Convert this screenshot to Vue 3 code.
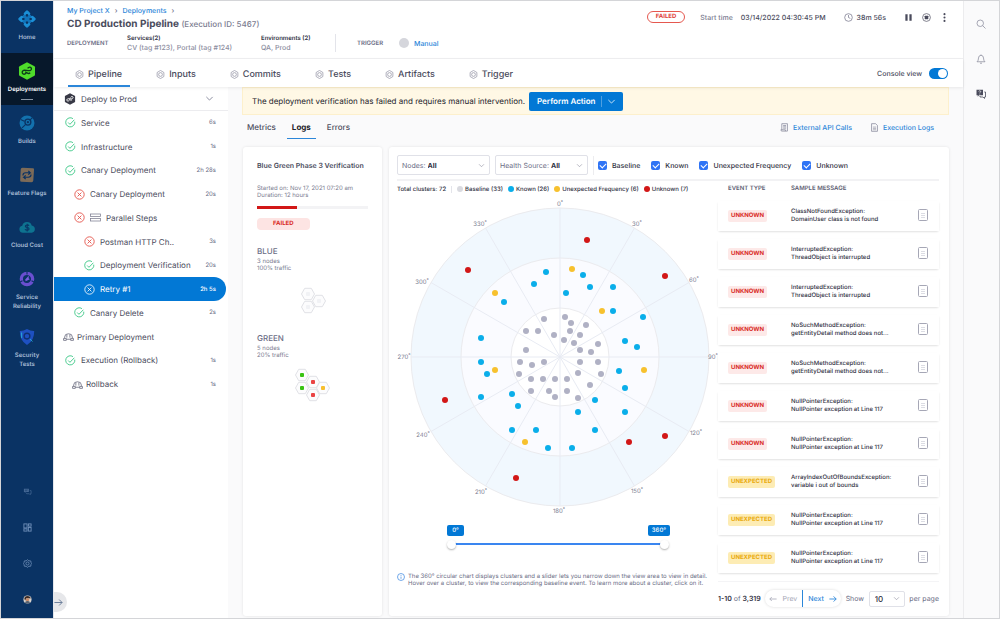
<script setup>
import { ref } from 'vue'

const icons = {
  home: '<g fill="#1b8fd6"><rect x="4" y="4" width="12" height="12" rx="2" transform="rotate(45 10 10)" fill="#1173bb"/><rect x="7" y="1" width="6" height="6" rx="1.5" transform="rotate(45 10 4)"/><rect x="7" y="13" width="6" height="6" rx="1.5" transform="rotate(45 10 16)"/><rect x="1" y="7" width="6" height="6" rx="1.5" transform="rotate(45 4 10)"/><rect x="13" y="7" width="6" height="6" rx="1.5" transform="rotate(45 16 10)"/></g><g fill="#0a3364"><circle cx="10" cy="6" r="1.5"/><circle cx="10" cy="14" r="1.5"/><circle cx="6" cy="10" r="1.5"/><circle cx="14" cy="10" r="1.5"/></g>',
  deployments: '<path d="M10 .3l8.300 4.500q.6.4.6 1v8.400q0 .6-.6 1L10 19.700l-8.300-4.500q-.6-.4-.6-1V5.800q0-.6.6-1z" fill="#4fdc2b"/><path d="M9.300 11.900c-1.200 1.500-2.600 2-3.700 1.300-1.500-1-1.200-3.500.8-4 1.400-.300 5.500.800 7 .300 1.900-.600 2-2.900.6-3.600-1.300-.6-2.500 0-3.300 1.200M8 10.800l2 1.100c1.200 1 2.600 1 3.500 0" fill="none" stroke="#0c3a1a" stroke-width="1.500"/>',
  builds: '<circle cx="10" cy="10" r="8.300" fill="#1371ad"/><circle cx="11" cy="9" r="3.300" fill="none" stroke="#0a3364" stroke-width="1.500"/><path d="M8.500 11.500l-4 4M3 6l4 2M16 4l-3 3" stroke="#0a3364" stroke-width="1.200"/><circle cx="11" cy="9" r="1.300" fill="#0a3364"/>',
  flags: '<path d="M3 4q0-2 2-2l11.500.6q1.500 0 1.300 1.600L17 16q-.2 2-2 2L4 17.500q-1.700-.1-1.600-1.800z" fill="#7d6b58"/><path d="M5.500 10.500q0-3 3-3h5l-2-2M13.500 7.500l-2 2M14.500 9.500q0 3-3 3h-5l2-2M6.500 12.500l2 2" fill="none" stroke="#0a3364" stroke-width="1.300"/>',
  cloud: '<path d="M5.500 16.500a4 4 0 0 1-.8-7.900 5.500 5.500 0 0 1 10.500-.4 4.200 4.200 0 0 1 0 8.300z" fill="#0e7390"/><path d="M12.300 8.500q-1-1-2.500-.8-1.800.3-1.700 1.500.2 1.200 2 1.300 2.200.2 2.200 1.600 0 1.300-2.100 1.400-1.500 0-2.500-.9M10.200 6.300v8.800" fill="none" stroke="#0a3364" stroke-width="1.200"/>',
  reliability: '<circle cx="10" cy="10" r="6.300" fill="none" stroke="#6a4fd0" stroke-width="3.600"/><path d="M10 0v5M1 14l4-2M19 14l-4-2" stroke="#0a3364" stroke-width="1.200"/><path d="M8.500 12.500l-.5-2L12 6.500l-.2 2.800 1.400 1z" fill="#7b5fe0"/>',
  security: '<path d="M10 1q4 2.500 8 2.300.3 10.500-8 15.700Q1.700 13.800 2 3.300 6 3.500 10 1z" fill="#1e50c0"/><circle cx="10" cy="9" r="3.200" fill="none" stroke="#0f2f6d" stroke-width="1.500"/><path d="M13 12l3 3M4 5v6" stroke="#27b0d8" stroke-width="1"/>',
  chat: '<path d="M2 4h11v7H7l-3 2v-2H2z" fill="currentColor"/><path d="M15 8h3v7h-2v2l-2-2H8v-2" fill="none" stroke="currentColor" stroke-width="1.500"/><path d="M4 6.500h7M4 8.500h5" stroke="#0a3364"/>',
  grid: '<g fill="none" stroke="currentColor" stroke-width="2"><rect x="2" y="2" width="7" height="9"/><rect x="2" y="13" width="7" height="5"/><rect x="12" y="2" width="6" height="5"/><rect x="12" y="10" width="6" height="8"/></g>',
  gear: '<g fill="none" stroke="currentColor" stroke-width="1.800"><path d="M10 1.500l3 2.500 4.200.3.800 4L19 10l-1.200 2-.6 4-4.200.3-3 2.200-3-2.200-4-.3-.8-4L1 10l1.200-2 .8-3.700L7 4z"/><circle cx="10" cy="10" r="3.500"/></g>',
  avatar: '<circle cx="10" cy="10" r="9" fill="#d9d3cd"/><path d="M3 9q0-7 7-7t7 6l-4-1-6 1-2 4z" fill="#3b2c28"/><circle cx="10" cy="10.500" r="4" fill="#c98e6c"/><path d="M4 16q6-5 12 0-6 6-12 0z" fill="#56606e"/>',
  target: '<g fill="none" stroke="currentColor" stroke-width="1.500"><path d="M10 1l7.500 4.500v9L10 19l-7.500-4.500v-9z"/><circle cx="10" cy="10" r="4.200"/></g>',
  stage: '<path d="M10 .5l8.500 4.700v9.600L10 19.500l-8.500-4.700V5.200z" fill="#383946"/><path d="M9 12c-1.500 2-4 1.800-4.300 0-.2-1.800 1.500-2.600 3-2.500l4.600.2c2 0 3.300-1.500 2.700-3-.8-1.500-3-1.200-4 .8M8.500 11l3 .8 2-.3" fill="none" stroke="#fff" stroke-width="1.500"/>',
  ok: '<g fill="none" stroke="#42c98a" stroke-width="1.700"><path d="M17.800 8.500A8.300 8.300 0 1 1 14.500 3"/><path d="M5.800 10l3.200 3.300L17 5"/></g>',
  fail: '<g fill="none" stroke="#e5584f" stroke-width="1.700"><circle cx="10" cy="10" r="8.500"/><path d="M6.500 6.500l7 7m0-7l-7 7"/></g>',
  failWhite: '<g fill="none" stroke="#fff" stroke-width="1.500"><circle cx="10" cy="10" r="8.500"/><path d="M6.500 6.500l7 7m0-7l-7 7"/></g>',
  group: '<g fill="none" stroke="#6f7083" stroke-width="1.500"><path d="M3 13V11q0-6 7-6t7 6v2M1 17h5v-3.500H1zM14 17h5v-3.500h-5zM6 15h8M7 6.500V12M12.500 6.500V12"/></g>',
  chevron: '<path d="M3 6.500l7 7 7-7" fill="none" stroke="currentColor" stroke-width="1.700"/>',
  doc: '<g fill="none" stroke="currentColor" stroke-width="1.500"><path d="M3.500 1.500h9l4 4v13h-13z"/><path d="M6.500 9h7M6.500 12h7M6.500 15h7" stroke-width="1.200"/></g>',
  list: '<g fill="none" stroke="currentColor" stroke-width="1.500"><path d="M4 15V1.500h12.500V18H4q-2 0-2-3h10v3M7 5.500h6.500M7 8.500h6.500M7 11.500h6.500"/></g>',
  clock: '<g fill="none" stroke="currentColor" stroke-width="1.700"><circle cx="10" cy="10" r="8.500"/><path d="M10 4.500V10l4 2"/></g>',
  pause: '<path d="M3 3h5v14H3zM12 3h5v14h-5z" fill="currentColor"/>',
  stop: '<circle cx="10" cy="10" r="8.700" fill="none" stroke="currentColor" stroke-width="1.500"/><rect x="6" y="6" width="8" height="8" rx="1" fill="currentColor"/>',
  more: '<g fill="currentColor"><circle cx="10" cy="2.500" r="2.300"/><circle cx="10" cy="10" r="2.300"/><circle cx="10" cy="17.500" r="2.300"/></g>',
  search: '<g fill="none" stroke="currentColor" stroke-width="1.500"><circle cx="8.500" cy="8.500" r="6.500"/><path d="M13.300 13.300L19 19"/></g>',
  bell: '<path d="M2 15.500q3-2 3-7.500 0-5 5-5.500 5 .5 5 5.500 0 5.500 3 7.500zM8 18q2 1.500 4 0M10 1v1.500" fill="none" stroke="currentColor" stroke-width="1.500"/>',
  help: '<path d="M1 1.500h13v11H6l-2.500 3v-3H1z" fill="currentColor"/><path d="M16.500 6H19v10h-2v3l-3-3H8v-2" fill="none" stroke="currentColor" stroke-width="1.600"/><path d="M5.500 5q.2-1.500 2-1.500t2 1.500q0 1-1 1.500-1 .4-1 1.800M7.500 9.500v1.500" fill="none" stroke="#fff" stroke-width="1.300"/>',
  info: '<g fill="none" stroke="#3a86e0" stroke-width="1.800"><circle cx="10" cy="10" r="8.700"/><path d="M10 9v5.500M10 5.300v2"/></g>',
  arrow: '<path d="M1 10h17M11.500 3.500L18 10l-6.500 6.500" fill="none" stroke="currentColor" stroke-width="2.200"/>',
  arrowLeft: '<path d="M19 10H2M7 5l-5 5 5 5" fill="none" stroke="currentColor" stroke-width="2"/>',
  bars: '<g fill="#fff" stroke="#7c7d90" stroke-width="1.500"><rect x="1" y="3" width="20" height="5"/><rect x="1" y="12" width="20" height="5"/></g>'
}

const modules = [
  { icon: 'home', label: 'Home' },
  { icon: 'deployments', label: 'Deployments', active: true },
  { icon: 'builds', label: 'Builds' },
  { icon: 'flags', label: 'Feature Flags' },
  { icon: 'cloud', label: 'Cloud Cost' },
  { icon: 'reliability', label: 'Service\nReliability' },
  { icon: 'security', label: 'Security\nTests' }
]
const utilities = [
  { icon: 'chat', label: 'Messages', dim: true },
  { icon: 'grid', label: 'Dashboards' },
  { icon: 'gear', label: 'Settings' },
  { icon: 'avatar', label: 'Profile' }
]
const tabs = ['Pipeline', 'Inputs', 'Commits', 'Tests', 'Artifacts', 'Trigger']

const steps = [
  { name: 'Service', time: '6s', icon: 'ok', level: 0 },
  { name: 'Infrastructure', time: '1s', icon: 'ok', level: 0 },
  { name: 'Canary Deployment', time: '2h 28s', icon: 'ok', level: 0 },
  { name: 'Canary Deployment', time: '20s', icon: 'fail', level: 1 },
  { name: 'Parallel Steps', icon: 'fail', level: 1, parallel: true },
  { name: 'Postman HTTP Ch..', time: '3s', icon: 'fail', level: 2 },
  { name: 'Deployment Verification', time: '20s', icon: 'ok', level: 2 },
  { name: 'Retry #1', time: '2h 5s', icon: 'failWhite', level: 2, selected: true },
  { name: 'Canary Delete', time: '2s', icon: 'ok', level: 1 },
  { name: 'Primary Deployment', icon: 'group', level: 0, group: true },
  { name: 'Execution (Rollback)', time: '1s', icon: 'ok', level: 0 },
  { name: 'Rollback', time: '1s', icon: 'group', level: 1, group: true }
]

const filters = ref([
  { name: 'Baseline', on: true },
  { name: 'Known', on: true },
  { name: 'Unexpected Frequency', on: true },
  { name: 'Unknown', on: true }
])
const legend = [
  { text: 'Baseline (33)', kind: 'base' },
  { text: 'Known (26)', kind: 'known' },
  { text: 'Unexpected Frequency (6)', kind: 'unexpected' },
  { text: 'Unknown (7)', kind: 'unknown' }
]

const clusters = [
  { color: '#b0b1c4', points: [[-16, -38], [-34, -26], [-22, -26], [-6, -22], [5, -40], [11, -34], [26, -32], [10, -26], [20, -22], [4, -17], [14, -14], [38, -13], [20, -7], [31, -5], [-34, -7], [-40, 5], [-28, 8], [-16, 5], [-41, 17], [-29, 22], [-17, 22], [-5, 22], [7, 22], [-29, 34], [-11, 34], [-5, 40], [7, 34], [18, 41], [30, 28], [41, 17], [18, 16], [20, 5], [38, 5]] },
  { color: '#0aaeea', points: [[-14, -85], [-26, -73], [-56, -55], [23, -82], [30, -70], [6, -64], [53, -70], [53, -46], [83, -40], [-79, -19], [65, -16], [77, -10], [-79, 5], [-73, 17], [-79, 40], [-48, 37], [-42, 49], [-48, 73], [-24, 73], [-12, 91], [12, 91], [18, 55], [35, 43], [35, 73], [65, 31], [65, 55], [59, 14]] },
  { color: '#f7c12e', points: [[12, -88], [-65, -64], [42, -46], [-65, 13], [84, 13], [-35, 85]] },
  { color: '#d21717', points: [[27, -117], [-92, -87], [105, -81], [-115, 43], [-44, 121], [69, 85], [105, 79]] }
]
const spokes = Array.from({ length: 12 }, (_, i) => {
  const a = (i * Math.PI) / 6
  return { x: 149 * Math.sin(a), y: -149 * Math.cos(a) }
})
const angles = [
  [0, 0, -151], [30, 77, -131], [60, 134, -75], [90, 153, 2], [120, 136, 78], [150, 77, 136],
  [180, -1, 156], [210, -79, 137], [240, -137, 80], [270, -156, 2], [300, -138, -73], [330, -80, -131]
]

const blueNodes = [[7, 7], [18, 14], [7, 20]]
const greenNodes = [
  [7, 7, '#39c312'], [18, 14, '#ea4444'], [7, 20, '#39c312'], [18, 27, '#ea4444'], [28, 20, '#f7bf2e']
]

const events = [
  ['UNKNOWN', 'ClassNotFoundException:', 'DomainUser class is not found'],
  ['UNKNOWN', 'InterruptedException:', 'ThreadObject is interrupted'],
  ['UNKNOWN', 'InterruptedException:', 'ThreadObject is interrupted'],
  ['UNKNOWN', 'NoSuchMethodException:', 'getEntityDetail method does not...'],
  ['UNKNOWN', 'NoSuchMethodException:', 'getEntityDetail method does not...'],
  ['UNKNOWN', 'NullPointerException:', 'NullPointer exception at Line 117'],
  ['UNKNOWN', 'NullPointerException:', 'NullPointer exception at Line 117'],
  ['UNEXPECTED', 'ArrayIndexOutOfBoundsException:', 'variable i out of bounds'],
  ['UNEXPECTED', 'NullPointerException:', 'NullPointer exception at Line 117'],
  ['UNEXPECTED', 'NullPointerException:', 'NullPointer exception at Line 117']
]

const consoleView = ref(true)
const from = ref(0)
const to = ref(360)
</script>

<template>
  <div class="app">
    <nav class="side" aria-label="Modules">
      <a v-for="m in modules" :key="m.label" href="#" class="module" :class="{ active: m.active }">
        <svg class="i18" viewBox="0 0 20 20" v-html="icons[m.icon]" />
        <span>{{ m.label }}</span>
      </a>
      <div class="utilities">
        <button v-for="u in utilities" :key="u.label" :aria-label="u.label" :class="{ dim: u.dim }">
          <svg class="i9" viewBox="0 0 20 20" v-html="icons[u.icon]" />
        </button>
      </div>
      <button class="expand" aria-label="Expand navigation">
        <svg class="i9" viewBox="0 0 20 20" v-html="icons.arrow" />
      </button>
    </nav>

    <div class="page">
      <header class="head">
        <div class="head-left">
          <div class="crumbs"><a href="#">My Project X</a><i>›</i><a href="#">Deployments</a><i>›</i></div>
          <h1>CD Production Pipeline <small>(Execution ID: 5467)</small></h1>
          <div class="meta">
            <span class="cap cap-dep">DEPLOYMENT</span>
            <div class="pair services"><b>Services(2)</b><span>CV (tag #123), Portal (tag #124)</span></div>
            <div class="pair envs"><b>Environments (2)</b><span>QA, Prod</span></div>
            <span class="cap cap-trigger">TRIGGER</span>
            <span class="who"></span>
            <a href="#">Manual</a>
          </div>
        </div>
        <div class="status">
          <span class="failed">FAILED</span>
          <span class="muted">Start time</span>
          <span class="date">03/14/2022 04:30:45 PM</span>
          <svg class="i9 clock" viewBox="0 0 20 20" v-html="icons.clock" />
          <span class="elapsed">38m 56s</span>
          <button aria-label="Pause"><svg class="i9" viewBox="0 0 20 20" v-html="icons.pause" /></button>
          <button aria-label="Stop"><svg class="i9" viewBox="0 0 20 20" v-html="icons.stop" /></button>
          <button aria-label="More"><svg class="i9" viewBox="0 0 20 20" v-html="icons.more" /></button>
        </div>
      </header>

      <div class="tabs">
        <a v-for="(t, i) in tabs" :key="t" href="#" :class="{ on: i === 0 }">
          <svg class="i9" viewBox="0 0 20 20" v-html="icons.target" />{{ t }}
        </a>
        <label class="switch">Console view <input v-model="consoleView" type="checkbox" role="switch" /></label>
      </div>

      <div class="body">
        <aside class="tree">
          <button class="stage">
            <svg class="i12" viewBox="0 0 20 20" v-html="icons.stage" />
            <span>Deploy to Prod</span>
            <svg class="i9 chev" viewBox="0 0 20 20" v-html="icons.chevron" />
          </button>
          <ul>
            <li v-for="(s, i) in steps" :key="i" :class="['level' + s.level, { selected: s.selected, group: s.group }]">
              <svg class="i11" viewBox="0 0 20 20" v-html="icons[s.icon]" />
              <svg v-if="s.parallel" class="i11" viewBox="0 0 22 20" v-html="icons.bars" />
              <span>{{ s.name }}</span>
              <time v-if="s.time">{{ s.time }}</time>
            </li>
          </ul>
        </aside>

        <main class="content">
          <div class="banner">
            <span>The deployment verification has failed and requires manual intervention.</span>
            <button class="action">
              <span>Perform Action</span>
              <svg class="i9" viewBox="0 0 20 20" v-html="icons.chevron" />
            </button>
          </div>
          <div class="subtabs">
            <a href="#">Metrics</a><a href="#" class="on">Logs</a><a href="#">Errors</a>
            <div class="links">
              <a href="#"><svg class="i9" viewBox="0 0 20 20" v-html="icons.list" />External API Calls</a>
              <a href="#"><svg class="i9" viewBox="0 0 20 20" v-html="icons.doc" />Execution Logs</a>
            </div>
          </div>

          <div class="panels">
            <section class="card summary">
              <h2>Blue Green Phase 3 Verification</h2>
              <p class="started">Started on: Nov 17, 2021 07:20 am<br />Duration: 12 hours</p>
              <div class="bar"><div></div></div>
              <span class="pill">FAILED</span>
              <h3>BLUE</h3>
              <p>3 nodes<br />100% traffic</p>
              <svg class="hexes" width="36" height="36" viewBox="-6 0 36 36">
                <g v-for="(n, i) in blueNodes" :key="i" :transform="`translate(${n[0]} ${n[1]})`">
                  <path d="M-6.500 0L-3.300-5.700H3.300L6.500 0 3.300 5.700H-3.300Z" fill="#fcfcfd" stroke="#e0e1e6" />
                  <rect x="-2" y="-2" width="4" height="4" rx="1" fill="#f1f2f5" />
                </g>
              </svg>
              <h3 class="green">GREEN</h3>
              <p>5 nodes<br />20% traffic</p>
              <svg class="hexes green-hexes" width="36" height="36" viewBox="0 0 36 36">
                <g v-for="(n, i) in greenNodes" :key="i" :transform="`translate(${n[0]} ${n[1]})`">
                  <path d="M-6.500 0L-3.300-5.700H3.300L6.500 0 3.300 5.700H-3.300Z" fill="#fcfcfd" stroke="#e0e1e6" />
                  <rect x="-2" y="-2" width="4" height="4" rx="1" :fill="n[2]" />
                </g>
              </svg>
            </section>

            <section class="card logs">
              <div class="filters">
                <div class="box">
                  <label for="nodes">Nodes:</label>
                  <select id="nodes"><option>All</option></select>
                  <svg class="i7" viewBox="0 0 20 20" v-html="icons.chevron" />
                </div>
                <div class="box">
                  <label for="source">Health Source:</label>
                  <select id="source"><option>All</option></select>
                  <svg class="i7" viewBox="0 0 20 20" v-html="icons.chevron" />
                </div>
                <div class="checks">
                  <label v-for="f in filters" :key="f.name"><input v-model="f.on" type="checkbox" />{{ f.name }}</label>
                </div>
              </div>

              <div class="split">
                <div class="chart">
                  <div class="legend">
                    <span class="total">Total clusters: 72</span>
                    <span v-for="l in legend" :key="l.kind"><i :class="l.kind"></i>{{ l.text }}</span>
                  </div>
                  <svg class="radar" viewBox="-163 -160 321 320" role="img" aria-label="Cluster chart">
                    <circle r="149" fill="#f1f8fe" stroke="#ebebee" />
                    <circle r="99" fill="#fafbff" stroke="#ebebee" />
                    <circle r="49" fill="#fff" stroke="#ebebee" />
                    <line v-for="(s, i) in spokes" :key="i" x1="0" y1="0" :x2="s.x" :y2="s.y" stroke="#e8ebf3" stroke-width="1" />
                    <g v-for="c in clusters" :key="c.color" :fill="c.color">
                      <circle v-for="(p, i) in c.points" :key="i" :cx="p[0]" :cy="p[1]" r="3" />
                    </g>
                    <text v-for="a in angles" :key="a[0]" :x="a[1]" :y="a[2]">{{ a[0] }}<tspan dy="-2" class="deg">°</tspan></text>
                  </svg>
                  <div class="range">
                    <div class="ends"><output>{{ from }}°</output><output>{{ to }}°</output></div>
                    <div class="track">
                      <input v-model="from" type="range" min="0" max="360" aria-label="Start angle" />
                      <input v-model="to" type="range" min="0" max="360" aria-label="End angle" />
                    </div>
                  </div>
                  <div class="hint">
                    <svg class="i8" viewBox="0 0 20 20" v-html="icons.info" />
                    <p>The 360° circular chart displays clusters and a slider lets you narrow down the view area to view in detail. Hover over a cluster, to view the corresponding baseline event. To learn more about a cluster, click on it.</p>
                  </div>
                </div>

                <div class="events">
                  <table>
                    <thead><tr><th>EVENT TYPE</th><th colspan="2">SAMPLE MESSAGE</th></tr></thead>
                    <tbody>
                      <tr v-for="(e, i) in events" :key="i">
                        <td><span class="tag" :class="e[0].toLowerCase()">{{ e[0] }}</span></td>
                        <td>{{ e[1] }}<br />{{ e[2] }}</td>
                        <td class="open">
                          <button aria-label="Open message">
                            <svg width="10" height="12" viewBox="0 0 10 12"><rect x=".5" y=".5" width="9" height="11" rx="1" fill="none" stroke="#a6a7b6" /><path d="M3 4.500h4M3 6.500h4M3 8.500h4" stroke="#dcdde4" /></svg>
                          </button>
                        </td>
                      </tr>
                    </tbody>
                  </table>
                  <div class="pager">
                    <span class="count"><b>1-10</b> of <b>3,319</b></span>
                    <div class="steps">
                      <button disabled><svg class="i8" viewBox="0 0 20 20" v-html="icons.arrowLeft" />Prev</button>
                      <button class="next">Next<svg class="i8" viewBox="0 0 20 20" v-html="icons.arrow" /></button>
                    </div>
                    <label for="size">Show</label>
                    <div class="box size">
                      <select id="size"><option>10</option></select>
                      <svg class="i7" viewBox="0 0 20 20" v-html="icons.chevron" />
                    </div>
                    <span>per page</span>
                  </div>
                </div>
              </div>
            </section>
          </div>
        </main>
      </div>
    </div>

    <aside class="rail">
      <button aria-label="Search"><svg class="i10" viewBox="0 0 20 20" v-html="icons.search" /></button>
      <button aria-label="Notifications"><svg class="i10" viewBox="0 0 20 20" v-html="icons.bell" /></button>
      <button aria-label="Help" class="dark"><svg class="i10" viewBox="0 0 20 20" v-html="icons.help" /></button>
    </aside>
  </div>
</template>

<style>
body { margin: 0; }
</style>

<style scoped>
* { box-sizing: border-box; }
.app {
  display: flex;
  min-height: 100vh;
  border: 1px solid #d4d5d8;
  background: #fafafb;
  color: #4a4b5c;
  font-family: Inter, "Liberation Sans", sans-serif;
  font-size: 7px;
  text-rendering: geometricPrecision;
}
button, select, input { font: inherit; color: inherit; margin: 0; text-rendering: inherit; }
button { padding: 0; border: 0; background: none; display: inline-flex; align-items: center; }
a { color: #2b86d9; text-decoration: none; }
h1, h2, h3, p, ul { margin: 0; padding: 0; font-weight: 400; }
svg { flex: none; display: block; }
.i7 { width: 7px; height: 7px; }
.i8 { width: 8px; height: 8px; }
.i9 { width: 9px; height: 9px; }
.i10 { width: 10px; height: 10px; }
.i11 { width: 11px; height: 11px; }
.i12 { width: 12px; height: 12px; }
.i18 { width: 18px; height: 18px; }

.side { position: relative; flex: none; width: 52px; display: flex; flex-direction: column; background: #0a3364; }
.module {
  display: flex; flex-direction: column; align-items: center; gap: 5px;
  min-height: 52px; padding: 9px 0 8px;
  color: #a9bdd6; font-size: 6px; line-height: 9px; font-weight: 600; text-align: center;
}
.module span { white-space: pre-line; }
.module.active { padding-bottom: 5px; background: #07182b; color: #fff; }
.module.active::after { content: ""; width: 12px; height: 1px; background: #8b97a6; }
.utilities { margin-top: auto; padding-bottom: 14px; display: flex; flex-direction: column; align-items: center; gap: 27px; color: #6f8fb8; }
.dim { opacity: .6; }
.expand { position: absolute; left: 53px; bottom: 6px; width: 13px; height: 20px; border-radius: 0 10px 10px 0; background: #e6e7ea; color: #6c7f9c; z-index: 2; }

.page { flex: 1; min-width: 0; display: flex; flex-direction: column; border-left: 1px solid #e3e6ec; box-shadow: 1px 0 0 #ececee; }
.head { display: flex; justify-content: space-between; height: 58px; padding: 4px 14px 0 13px; border-bottom: 1px solid #f0f0f2; background: #fff; }
.crumbs { display: flex; gap: 5px; line-height: 12px; font-weight: 500; }
.crumbs i { font-style: normal; color: #6b6d85; }
h1 { font-size: 10px; line-height: 15px; font-weight: 700; color: #4a4b5c; }
h1 small { font-size: 8px; font-weight: 500; color: #7b7c90; }
.meta { display: flex; align-items: center; height: 20px; margin-top: 1px; }
.cap { font-size: 6px; font-weight: 600; color: #6b6d85; }
.cap-dep { width: 60px; }
.cap-trigger { width: 42px; }
.pair { display: flex; flex-direction: column; line-height: 9px; font-weight: 500; color: #8c8da0; }
.pair b { font-size: 6px; font-weight: 600; color: #30313f; }
.services { width: 134px; }
.envs { width: 75px; margin-right: 21px; border-right: 1px solid #e3e4ea; }
.who { width: 10px; height: 10px; margin-right: 5px; border-radius: 50%; background: #d5d6dc; }
.meta a { font-weight: 500; }
.status { display: flex; align-items: center; height: 24px; color: #4a4b5c; }
.failed { padding: 0 8px; margin-right: 15px; border: 1px solid #e5584f; border-radius: 6px; line-height: 10px; font-size: 6px; font-weight: 700; color: #e0403a; }
.muted { margin-right: 8px; color: #7b7c90; font-weight: 500; }
.date { margin-right: 18px; font-weight: 500; }
.clock { margin-right: 4px; color: #7b7c90; }
.elapsed { margin-right: 9px; font-weight: 500; }
.status button { margin-left: 9px; }

.tabs { position: relative; z-index: 1; display: flex; align-items: stretch; gap: 19px; height: 28px; padding: 0 15px 0 14px; background: #fff; box-shadow: 0 1px 3px #00000014; }
.tabs a { display: flex; align-items: center; gap: 4px; padding: 4px 8px 0 7px; color: #4a4b5c; font-size: 9px; font-weight: 500; border-bottom: 2px solid transparent; }
.tabs a svg { color: #8a8b9c; }
.tabs a.on { border-color: #2b86d9; }
.switch { margin-left: auto; display: flex; align-items: center; gap: 7px; font-weight: 500; }
.switch input { appearance: none; width: 19px; height: 11px; border-radius: 6px; background: #0278d5; display: flex; padding: 1px; justify-content: flex-end; }
.switch input::before { content: ""; width: 9px; height: 9px; border-radius: 50%; background: #fff; }

.body { flex: 1; display: flex; }
.tree { flex: none; width: 174px; background: #fff; }
.stage { width: 100%; height: 24px; padding: 0 14px 0 10px; gap: 5px; border-bottom: 1px solid #ececef; font-size: 8px; }
.stage .chev { margin-left: auto; color: #6b6d85; }
.tree ul { display: grid; grid-auto-rows: 1fr; min-height: 285px; list-style: none; }
.tree li { display: flex; align-items: center; gap: 5px; padding: 0 12px 0 11px; font-size: 8px; }
.tree li.level1 { padding-left: 20px; }
.tree li.level2 { padding-left: 30px; }
.tree li.group { padding-left: 9px; gap: 3px; }
.tree li.group.level1 { padding-left: 18px; }
.tree time { margin-left: auto; font-size: 6px; color: #6b6d85; }
.tree li.selected { margin-right: 2px; padding-right: 10px; border-radius: 0 12px 12px 0; background: #0278d5; color: #fff; }
.tree li.selected time { color: #fff; font-weight: 500; }

.content { flex: 1; min-width: 0; display: flex; flex-direction: column; padding: 0 14px 2px; }
.banner { display: flex; align-items: center; gap: 4px; height: 28px; padding: 0 9px; border: 1px solid #fdf0cc; background: #fff8e5; color: #22222a; font-size: 8px; }
.action { height: 19px; border-radius: 2px; background: #0278d5; color: #fff; font-weight: 600; }
.action span { padding: 0 6px 0 8px; border-right: 1px solid #4f9fe0; line-height: 11px; }
.action svg { margin: 0 7px 0 5px; }
.subtabs { display: flex; height: 24px; font-size: 8px; font-weight: 500; }
.subtabs > a { display: flex; align-items: center; padding: 0 5px; margin-right: 6px; color: #4a4b5c; border-bottom: 1px solid transparent; }
.subtabs > a.on { font-weight: 700; color: #22222a; border-color: #2b86d9; }
.links { margin-left: auto; padding-right: 15px; display: flex; gap: 18px; font-size: 7px; }
.links a { display: flex; align-items: center; gap: 4px; }
.links svg { color: #7b7c90; }

.panels { flex: 1; display: flex; gap: 7px; margin-top: 8px; padding-left: 1px; }
.card { border-radius: 3px; background: #fff; box-shadow: 0 0 3px #0000001a; }
.summary { flex: none; width: 139px; padding: 14px; font-size: 6px; line-height: 7px; color: #7b7c90; display: flex; flex-direction: column; align-items: flex-start; }
h2 { font-size: 7px; line-height: 10px; font-weight: 600; color: #4a4b5c; white-space: nowrap; }
.started { margin-top: 14px; }
.bar { width: 100%; height: 3px; margin: 7px 0 9px; background: #f3f3f5; }
.bar div { width: 36%; height: 3px; background: #d21717; }
.pill { padding: 0 16px; border-radius: 4px; background: #fde4e3; color: #d92b26; font-weight: 700; line-height: 12px; }
h3 { margin: 16px 0 2px; font-size: 8px; line-height: 10px; font-weight: 500; color: #6b6d85; }
.hexes { align-self: center; margin-top: 15px; }
h3.green { margin-top: 10px; }
.green-hexes { margin-top: 9px; }

.logs { flex: 1; min-width: 0; padding: 8px 10px 0 8px; display: flex; flex-direction: column; }
.filters { display: flex; align-items: center; gap: 5px; padding-bottom: 4px; border-bottom: 2px solid #f2f2f4; }
.box { position: relative; display: flex; align-items: center; width: 93px; height: 20px; padding-left: 4px; border: 1px solid #e0e1e8; border-radius: 2px; color: #6b6d85; }
.box label { flex: none; padding-right: 2px; }
.box select { appearance: none; flex: 1; min-width: 0; width: 100%; padding: 0; border: 0; background: none; font-weight: 700; color: #30313f; }
.box svg { position: absolute; right: 4px; color: #8a8b9c; pointer-events: none; }
.checks { display: flex; gap: 11px; padding-left: 4px; border-left: 1px solid #ececef; line-height: 19px; color: #30313f; font-weight: 500; white-space: nowrap; }
.checks label { display: flex; align-items: center; gap: 5px; }
.checks input { appearance: none; width: 9px; height: 9px; border-radius: 2px; background: #2f74f5; display: grid; place-items: center; }
.checks input:checked::before { content: ""; width: 5px; height: 3px; border: solid #fff; border-width: 0 0 1px 1px; transform: rotate(-45deg); }

.split { flex: 1; display: grid; grid-template-columns: minmax(0, 1fr) 221px; }
.legend { display: flex; gap: 5px; height: 16px; align-items: center; font-size: 6px; font-weight: 500; color: #30313f; white-space: nowrap; }
.legend .total { padding-right: 5px; border-right: 1px solid #e3e4ea; }
.legend span { display: flex; align-items: center; }
.legend i { width: 6px; height: 6px; margin-right: 2px; border-radius: 50%; }
.base { background: #d9dae0; }
.known { background: #0aaeea; }
.unexpected { background: #f7c12e; }
.unknown { background: #d21717; }
.radar { width: 100%; }
.radar text { font-size: 6px; fill: #7b7c90; text-anchor: middle; }
.radar .deg { font-size: 5px; }
.range { width: 223px; margin: 8px 0 0 50px; }
.ends { display: flex; justify-content: space-between; }
.ends output { padding: 0 4px; min-width: 17px; border-radius: 2px; background: #0278d5; color: #fff; font-size: 6px; line-height: 11px; text-align: center; font-weight: 500; }
.track { position: relative; height: 16px; margin-right: 1px; background: linear-gradient(#3a86f0, #3a86f0) center / calc(100% - 10px) 2px no-repeat; }
.track input { position: absolute; inset: 0; width: 100%; appearance: none; background: none; pointer-events: none; }
.track input::-webkit-slider-thumb { appearance: none; width: 9px; height: 9px; border-radius: 50%; background: #fff; box-shadow: 0 1px 2px #0000004d; pointer-events: auto; }
.hint { display: flex; gap: 3px; margin-top: 21px; color: #6b6d85; }
.hint p { font-size: 6px; line-height: 7px; }

table { width: 100%; border-spacing: 0 8px; margin-top: -8px; font-size: 6px; line-height: 8px; color: #30313f; }
th { height: 12px; padding: 4px 0 0; text-align: left; font-weight: 600; color: #5b5c70; }
th:first-child, td:first-child { width: 73px; padding-left: 10px; }
td { height: 30px; padding: 0; font-weight: 500; }
tbody tr { border-radius: 3px; box-shadow: 0 1px 2px #0000001f; background: #fff; }
.open { width: 21px; }
.tag { display: inline-block; padding: 0 3px; border-radius: 2px; line-height: 12px; font-weight: 700; }
.tag.unknown { background: #fde9e8; color: #d92b26; }
.tag.unexpected { background: #fdecb4; color: #e9a90c; }
.pager { display: flex; align-items: center; justify-content: space-between; border-top: 1px solid #f4f4f6; padding-top: 8px; color: #6b6d85; white-space: nowrap; }
.pager b { font-weight: 600; color: #30313f; }
.steps { display: flex; border-radius: 9px; box-shadow: 0 0 3px #00000026; }
.steps button { height: 17px; gap: 5px; padding: 0 5px 0 4px; color: #a6a7b6; }
.steps .next { padding: 0 4px 0 5px; border-left: 1px solid #2b86d9; color: #2b86d9; font-weight: 500; }
.box.size { width: 36px; height: 16px; padding-left: 5px; }
.box.size select { font-size: 8px; font-weight: 500; }

.rail { flex: none; width: 36px; display: flex; flex-direction: column; align-items: center; gap: 25px; padding-top: 18px; color: #8a8b9c; }
.rail .dark { color: #4a4b5c; }
</style>
